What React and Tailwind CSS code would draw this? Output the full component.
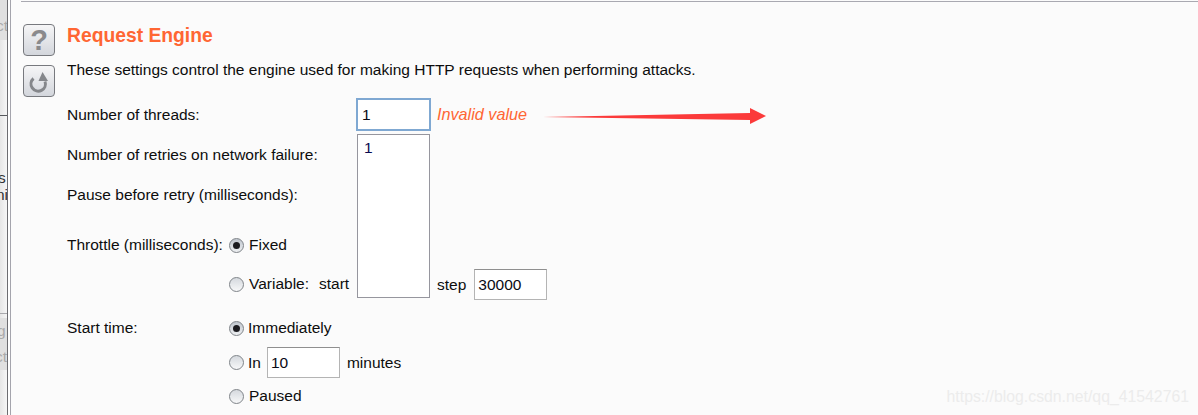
import React from 'react';

const Radio = ({ checked }) => (
  <span className={`w-[15px] h-[15px] rounded-full border border-[#7f8489] bg-gradient-to-b flex items-center justify-center shrink-0 ${checked ? 'from-[#bfc5cd] to-[#eef0f2]' : 'from-[#d5d9de] to-[#f7f8f9]'}`}>
    {checked && <span className="w-[7px] h-[7px] rounded-full bg-[#1b1b1f]" />}
  </span>
);

const TextBox = ({ value, className = '' }) => (
  <div className={`border border-[#b4b4b4] border-t-[#8f8f8f] bg-white h-[31px] w-[73px] pl-[3px] flex items-center text-[#0a0a14] shrink-0 ${className}`}>
    {value}
  </div>
);

const SideButton = ({ children }) => (
  <div className="w-[32px] h-[32px] rounded-[4px] border border-[#77797e] bg-gradient-to-b from-[#f6f6f7] to-[#d3d6dc] flex items-center justify-center">
    {children}
  </div>
);

const App = () => {
  return (
    <div className="w-[1198px] h-[415px] relative overflow-hidden flex bg-[#fbfbfb] text-[15.5px] text-[#0d0d0d] font-['Liberation_Sans',Arial,sans-serif]">
      {/* cut-off panel on the left */}
      <div className="w-[8px] bg-gradient-to-r from-[#e6e6e6] to-[#f6f6f6] border-r border-[#6c6c70] relative shrink-0">
        <div className="absolute left-0 top-0 w-[7px] h-[40px] bg-[#e0e0e0] text-[#aaa] overflow-hidden whitespace-nowrap leading-[52px]">
          <span className="ml-[-4px]">ct</span>
        </div>
        <div className="absolute left-0 top-[115px] w-[7px] h-px bg-[#55585c]" />
        <div className="absolute left-0 top-[169px] w-[7px] text-[#333] leading-[17px] overflow-hidden">
          <div className="ml-[-2px]">s</div>
          <div className="ml-[-4px] whitespace-nowrap">ni</div>
        </div>
        <div className="absolute left-0 top-[313px] w-[7px] h-px bg-[#a9a9ad]" />
        <div className="absolute left-0 top-[318px] w-[7px] h-[52px] bg-[#e0e0e0] text-[#aaa] overflow-hidden whitespace-nowrap leading-[26px]">
          <div className="ml-[-3px]">g</div>
          <div className="ml-[-5px]">ct</div>
        </div>
      </div>

      <div className="w-[2px] bg-white shrink-0" />

      <div className="flex-1 border-l border-[#a4a4ac] relative">
        <div className="h-px mt-px ml-[10px] bg-[#a9a9b1]" />

        <div className="flex">
          {/* help and restore buttons */}
          <div className="w-[56px] pl-[12px] pt-[22px] flex flex-col gap-[9px] shrink-0">
            <SideButton>
              <span className="text-[29px] font-bold leading-none text-[#8a8a8c]">?</span>
            </SideButton>
            <SideButton>
              <svg width="26" height="26" viewBox="0 0 26 26" fill="none">
                <path d="M7.5 10.5a7.2 7.2 0 1 0 11.5 3" stroke="#85878b" strokeWidth="3" />
                <path d="M16.5 4l5.5 9h-9.5z" fill="#85878b" />
              </svg>
            </SideButton>
          </div>

          <div className="flex-1">
            <h1 className="mt-[23px] text-[19.3px] leading-[22px] font-bold text-[#ff6633]">Request Engine</h1>
            <p className="mt-[13px] leading-[20px]">
              These settings control the engine used for making HTTP requests when performing attacks.
            </p>

            <div className="mt-[18px] flex items-center h-[33px] leading-[20px]">
              <div className="w-[289px] shrink-0">Number of threads:</div>
              <div className="w-[75px] h-[33px] border-2 border-[#7fa8d2] bg-white pl-[4px] flex items-center text-[#0a0a14]">1</div>
              <span className="ml-[6px] mb-[2px] italic text-[#ff6633] text-[16.2px]">Invalid value</span>
            </div>

            <div className="mt-[3px] flex">
              {/* labels column */}
              <div className="w-[290px] shrink-0 leading-[20px]">
                <div className="mt-[11px]">Number of retries on network failure:</div>
                <div className="mt-[20px]">Pause before retry (milliseconds):</div>
                <div className="mt-[30px] flex items-center">
                  <span className="w-[162px] shrink-0">Throttle (milliseconds):</span>
                  <Radio checked />
                  <span className="ml-[5px]">Fixed</span>
                </div>
                <div className="mt-[19px] flex items-center pl-[162px]">
                  <Radio />
                  <span className="ml-[5px]">Variable:</span>
                  <span className="ml-[10px]">start</span>
                </div>
              </div>

              <div className="w-[73px] h-[164px] border border-[#96969e] bg-white pl-[6px] pt-[3px] leading-[20px] text-[#0a0a50] shrink-0">1</div>

              <div className="self-end mb-[-2px] flex items-center">
                <span className="ml-[7px]">step</span>
                <TextBox value="30000" className="ml-[8px]" />
              </div>
            </div>

            <div className="mt-[20px] flex leading-[20px]">
              <div className="w-[162px] shrink-0">Start time:</div>
              <div className="flex flex-col">
                <div className="flex items-center h-[20px]">
                  <Radio checked />
                  <span className="ml-[4px]">Immediately</span>
                </div>
                <div className="flex items-center mt-[9px] h-[31px]">
                  <Radio />
                  <span className="ml-[4px]">In</span>
                  <TextBox value="10" className="ml-[6px]" />
                  <span className="ml-[7px]">minutes</span>
                </div>
                <div className="flex items-center mt-[8px] h-[20px]">
                  <Radio />
                  <span className="ml-[5px]">Paused</span>
                </div>
              </div>
            </div>
          </div>
        </div>
      </div>

      {/* red arrow drawn on top of the screenshot */}
      <svg className="absolute left-[543px] top-[107px]" width="224" height="18" viewBox="0 0 224 18">
        <polygon points="0,10 207,6 207,1 223,9 207,17 207,13" fill="#fb3a3a" />
      </svg>

      <div className="absolute right-[9px] top-[388px] text-[15.8px] leading-[18px] text-[#ececec]">
        https://blog.csdn.net/qq_41542761
      </div>
    </div>
  );
};

export default App;
